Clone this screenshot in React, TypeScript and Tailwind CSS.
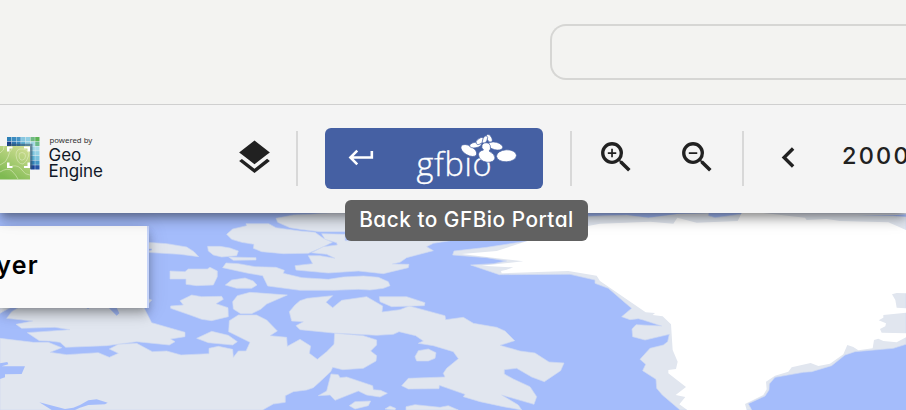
import type { ReactNode } from 'react';
import { MdChevronLeft, MdKeyboardReturn, MdLayers, MdZoomIn, MdZoomOut } from 'react-icons/md';

const islands = [
  '440,112 500,116 560,126 582,140 596,155 540,148 440,142',
  '623,124 660,124 690,129 715,138 710,152 665,156 640,150 625,138',
  '686,156 768,158 768,165 700,166',
  '510,198 555,200 565,192 622,192 630,187 652,198 652,215 640,240 590,242 558,238 558,222 510,222',
  '676,240 695,225 735,219 760,228 771,240 755,250 710,250',
  '668,188 678,174 715,176 765,185 828,187 853,196 850,205 906,218 985,223 1030,216 1090,213 1135,217 1165,230 1170,242 1150,250 1110,255 1075,253 1000,256 900,256 803,243 788,212 745,205',
  '680,88 698,72 740,62 738,56 806,56 828,68 900,78 945,82 970,100 997,112 960,130 925,145 850,146 785,140 760,130 762,118 725,112 695,103',
  '828,40 880,30 930,28 990,24 1764,24 1764,60 1400,80 960,80 900,73 870,68 833,52',
  '965,86 1035,88 1035,107 1350,107 1300,115 1280,125 1300,137 1220,158 1200,172 1177,177 1227,178 1225,188 1150,206 1075,198 985,204 888,195 885,182 938,176 925,152 960,152 1005,160 980,148 935,143 970,125 1012,120 1010,113 975,103',
  '512,303 550,300 540,287 575,270 605,275 665,274 670,283 648,296 684,308 685,335 635,347 605,343 570,330 512,310',
  '698,290 712,272 750,262 862,270 800,297 782,313 755,326 722,326 700,312',
  '590,400 635,379 685,391 712,410 698,420 625,413',
  '55,308 35,320 20,340 98,348 48,358 65,370 165,367 210,374 82,383 118,407 150,408 180,412 197,427 320,422 410,410 508,420 525,410 512,402 555,395 555,382 455,353 432,308',
  '440,280 455,285 445,297 440,297',
  '0,308 30,308 0,325',
  '0,400 100,412 145,412 185,428 150,442 200,449 295,443 328,457 355,445 328,432 355,418 410,415 457,440 500,438 543,450 627,446 627,430 655,424 698,433 700,457 715,438 738,438 750,412 686,380 688,347 715,330 770,330 800,345 832,378 810,392 860,397 862,424 900,403 932,423 928,445 952,463 980,440 1002,418 1004,385 1090,392 1130,405 1130,420 1112,438 1130,452 1128,468 1090,490 1028,494 998,487 992,500 960,530 940,548 920,555 880,560 856,572 856,592 820,597 788,615 0,615',
  '875,348 868,320 885,300 900,287 922,280 998,272 978,292 998,308 1025,286 1100,275 1148,303 1146,321 1200,314 1228,303 1280,317 1335,332 1337,344 1390,337 1420,355 1490,367 1515,378 1544,407 1500,421 1560,438 1605,444 1647,471 1692,474 1682,497 1633,530 1595,516 1550,490 1513,494 1513,507 1540,522 1590,545 1610,575 1602,598 1505,570 1555,600 1565,615 1510,605 1440,590 1390,575 1395,568 1318,541 1317,551 1225,552 1205,542 1225,520 1335,516 1330,505 1340,490 1375,461 1360,440 1300,422 1255,415 1270,408 1247,392 1197,380 1180,388 1130,391 1000,384 900,374 888,362 910,350',
  '1138,275 1220,275 1275,293 1273,302 1175,305 1140,290',
  '1245,455 1255,437 1285,432 1308,443 1305,460 1285,468 1250,468',
  '993,507 1015,509 1020,518 1040,516 1118,542 1120,554 1142,556 1162,565 1140,576 1100,570 1075,558 1005,586 990,570 955,572 980,558',
  '1048,602 1065,590 1112,588 1105,602 1065,612',
  '1155,612 1170,603 1187,610 1185,615',
  '1218,605 1245,599 1320,607 1345,602 1375,615 1218,615',
  '1358,150 1362,138 1460,127 1590,107 1700,90 1764,70 1764,34 1880,30 1945,38 2035,26 2125,24 2125,32 2145,38 2250,24 2718,24 2718,418 2680,430 2565,440 2535,450 2495,482 2435,500 2410,502 2325,517 2308,537 2307,555 2295,573 2245,596 2255,615 2040,615 1987,570 1970,550 1968,523 1928,497 1937,478 1920,463 1950,430 1990,420 2003,410 2008,388 1935,405 1898,395 1896,372 1908,359 1985,363 1930,345 1915,341 1890,344 1865,335 1895,310 1875,293 1825,250 1785,235 1785,225 1710,208 1498,209 1412,180 1480,176 1520,168 1460,158',
];

const lakes = [
  '440,132 455,131 455,136 440,137',
  '326,308 350,332 358,325 350,308',
  '258,308 270,308 264,312',
  '0,475 22,471 25,478 5,484 75,484 65,507 15,508 15,517 0,522',
  '118,592 195,612 220,608 240,600 265,586 290,583 323,593 315,598 265,600 240,608 225,615 155,615',
  '1764,24 2125,24 2035,26 1945,37 1880,29 1764,31',
  '2570,31 2680,31 2718,28 2718,35 2680,33',
];

const iceSheet =
  '1385,147 1490,138 1585,107 1700,75 1800,56 1950,50 2020,56 2032,38 2090,53 2213,48 2225,24 2290,24 2415,38 2420,45 2480,42 2520,48 2665,52 2718,75 2718,265 2690,264 2676,268 2686,285 2690,308 2718,310 2718,323 2650,330 2650,338 2636,346 2658,355 2656,364 2640,372 2645,383 2718,385 2718,397 2690,412 2650,408 2635,401 2622,405 2618,430 2575,436 2560,426 2542,420 2530,448 2490,476 2455,483 2432,474 2375,487 2365,500 2325,512 2298,530 2300,553 2290,570 2235,597 2240,615 2062,615 2038,598 2056,576 2027,570 2058,546 2005,505 2005,495 2028,492 2033,470 2018,435 2013,358 1988,334 1958,330 1965,324 1937,322 1800,228 1790,212 1705,198 1505,205 1503,198 1520,194 1540,187 1445,182 1570,169';

function WorldMap() {
  return (
    <svg className="block h-[197px] w-[906px]" viewBox="0 24 2718 591" preserveAspectRatio="none" aria-hidden="true">
      <rect y="24" width="2718" height="591" fill="#a4bcfb" />
      <g fill="#e1e6ef" stroke="#cfdaf2" strokeWidth="2" strokeLinejoin="round">
        {islands.map((points) => (
          <polygon key={points} points={points} />
        ))}
      </g>
      {lakes.map((points) => (
        <polygon key={points} points={points} fill="#a4bcfb" />
      ))}
      <polygon points={iceSheet} fill="#ffffff" />
    </svg>
  );
}

const tileColors = [
  '#2c7fb5', '#3c8cc0', '#4594c6', '#86c6df', '#8fcde2', '#6fba83', '#5cb455',
  '#173f8b', '#2d72ae', '#3787bd', '#5fb0d3', '#93cfe2', '#a3d8e4', '#6cbb8b',
  '#12357d', '#2b6fae', '#3787bd', '#4ea3cc', '#86c6df', '#9bd3e4', '#a9dce8',
  '#12357d', '#2b6fae', '#3787bd', '#4ea3cc', '#86c6df', '#7cc4df', '#93d1e4',
  '#12357d', '#2b6fae', '#3787bd', '#4ea3cc', '#86c6df', '#5bb0d4', '#79c2dd',
  '#12357d', '#2b6fae', '#3787bd', '#4ea3cc', '#86c6df', '#3181b9', '#4597c6',
  '#12357d', '#2b6fae', '#3787bd', '#4ea3cc', '#86c6df', '#17429a', '#2553a4',
];

function GeoEngineMark() {
  return (
    <svg className="block h-[44px] w-[40px]" viewBox="0 0 40 44" aria-hidden="true">
      <defs>
        <linearGradient id="terrain" x1="0.8" y1="0" x2="0.3" y2="1">
          <stop offset="0" stopColor="#cfdd92" />
          <stop offset="1" stopColor="#7fba52" />
        </linearGradient>
      </defs>
      {tileColors.map((color, i) => (
        <rect key={i} x={7 + (i % 7) * 4.7} y={1 + Math.floor(i / 7) * 4.7} width="4.3" height="4.3" fill={color} />
      ))}
      <path d="M8 7.800H32.500V33H30V10H8Z" fill="#35546b" opacity=".6" />
      <rect y="10" width="30" height="33.5" fill="url(#terrain)" />
      <g fill="none" stroke="#e9f2cf" strokeWidth=".6" opacity=".85">
        <path d="M0 17Q5 14 4 10M0 29Q7 26 8 21T12 13M0 36Q8 31 12 35T18 43M12 30Q19 29 22 34T30 39" />
        <path d="M19 20Q18.500 16.500 22 16.500T25.500 20T22.500 24T19 20ZM16 19Q16 12 23 13T28.500 20T23 28Q17 28 16 19" />
      </g>
      <path
        d="M7 15.500V10.500H12.500V12.500H9.500V15.500ZM24 10.500H30V15.500H27.500V12.500H24ZM7 26.500V32H12.500V30H9.500V26.500ZM24 32H30V26.500H27.500V30H24Z"
        fill="#fff"
      />
    </svg>
  );
}

function GfbioLogo() {
  return (
    <svg className="block h-[54px] w-[102px]" viewBox="416 132 102 54" role="img" aria-label="gfbio">
      <text
        x="416.500"
        y="175.700"
        fill="#fff"
        stroke="#fff"
        strokeWidth=".35"
        fontSize="32.500"
        fontWeight="300"
        textLength="75"
        className="font-['Open_Sans',sans-serif]"
      >
        gfbıo
      </text>
      <g fill="#fff" stroke="#4560a3" strokeWidth=".7">
        <ellipse cx="468.800" cy="150.500" rx="8.800" ry="4.700" transform="rotate(30 468.800 150.500)" />
        <ellipse cx="495.500" cy="146" rx="7.500" ry="3.800" transform="rotate(14 495.500 146)" />
        <ellipse cx="475.500" cy="145" rx="6" ry="2.800" transform="rotate(-10 475.500 145)" />
        <ellipse cx="480" cy="141" rx="4.500" ry="2.600" transform="rotate(-35 480 141)" />
        <ellipse cx="489.300" cy="138.300" rx="2.400" ry="4.200" transform="rotate(-28 489.300 138.300)" />
        <ellipse cx="485" cy="139.500" rx="2.200" ry="4" transform="rotate(22 485 139.500)" />
        <path d="M482 145Q484 141.800 488.500 143.200Q491 145 490.500 149Q489.500 150.500 489 151Q495 154 495 158Q494 162.500 487 162.300Q479 161 478.500 154.500Q478.500 151 483.500 150Q481 147.500 482 145Z" />
        <ellipse cx="506.500" cy="155.800" rx="10" ry="6" transform="rotate(-3 506.500 155.800)" />
      </g>
    </svg>
  );
}

function Divider() {
  return <div className="mt-[26px] h-[55px] w-[2px] shrink-0 bg-[#d8d8d8]" />;
}

function IconButton({ label, children }: { label: string; children: ReactNode }) {
  return (
    <button aria-label={label} className="mt-[32px] block size-10 shrink-0 text-[#212121]">
      {children}
    </button>
  );
}

function Toolbar() {
  return (
    <div className="relative z-10 flex h-[108px] items-start bg-[#f4f4f4] shadow-[0_4px_8px_-2px_rgba(0,0,0,0.3),0_8px_10px_rgba(0,0,0,0.16),0_2px_20px_rgba(0,0,0,0.14)]">
      <div className="flex w-[234px] shrink-0 pt-[31px]">
        <GeoEngineMark />
        <div className="ml-[8.5px] text-[#111827]">
          <div className="h-[11px] pl-px font-['Noto_Sans',sans-serif] text-[7.8px] leading-[9px] text-[#333]">
            powered by
          </div>
          <div className="font-[Inter,sans-serif] text-[17px] leading-[16px] tracking-[-0.05px] [font-feature-settings:'cv11']">
            <div>Geo</div>
            <div>Engine</div>
          </div>
        </div>
      </div>
      <IconButton label="Layers">
        <MdLayers size={41} />
      </IconButton>
      <div className="w-[22px] shrink-0" />
      <Divider />
      <div className="relative mt-[23px] ml-[27px] h-[61px] w-[218px] shrink-0">
        <button
          aria-label="Back to GFBio Portal"
          className="flex h-full w-full items-center rounded-[6px] bg-[#4560a3] pb-[2px] pl-[20.5px] text-white"
        >
          <MdKeyboardReturn size={31} className="shrink-0" />
          <span className="mt-[2px] ml-[39.5px]">
            <GfbioLogo />
          </span>
        </button>
        <div
          role="tooltip"
          className="absolute top-[71.5px] left-[20px] flex h-[41px] w-[243px] items-center justify-center rounded-[6px] bg-[#616161] pb-px font-[Inter,sans-serif] text-[20.8px] font-medium tracking-[0.5px] whitespace-nowrap text-white [font-feature-settings:'cv11']"
        >
          Back to GFBio Portal
        </div>
      </div>
      <div className="w-[27px] shrink-0" />
      <Divider />
      <div className="flex w-[170px] shrink-0 gap-[41px] pl-[24px]">
        <IconButton label="Zoom in">
          <MdZoomIn size={40.5} />
        </IconButton>
        <IconButton label="Zoom out">
          <MdZoomOut size={40.5} />
        </IconButton>
      </div>
      <Divider />
      <div className="ml-[24px] shrink-0">
        <IconButton label="Previous">
          <MdChevronLeft size={41} />
        </IconButton>
      </div>
      <div className="mt-[34px] ml-[34px] font-[Inter,sans-serif] text-[23.5px] leading-[34px] font-medium tracking-[2.2px] whitespace-nowrap text-[#212121]">
        2000
      </div>
    </div>
  );
}

export default function App() {
  return (
    <div className="h-[410px] w-[906px] overflow-hidden bg-[#a4bcfb]">
      <header className="relative z-20 flex h-[105px] justify-end border-b border-[#cfcfcf] bg-[#f3f3f1] pt-[24px]">
        <div className="h-[56px] w-[356px] rounded-l-[16px] border-2 border-r-0 border-[#d6d6d4]" />
      </header>
      <Toolbar />
      <main className="relative h-[197px]">
        <WorldMap />
        <div className="absolute top-[13px] left-0 flex h-[82px] w-[149px] justify-start border-r-2 border-[#c5d3f8] bg-[#fafafa] pt-[22px] shadow-[0_4px_8px_-2px_rgba(0,0,0,0.25),0_8px_10px_rgba(0,0,0,0.14),0_2px_20px_rgba(0,0,0,0.12)]">
          <span className="flex w-[39px] justify-end font-[Inter,sans-serif] text-[25px] leading-[34px] font-semibold tracking-[1.3px] whitespace-nowrap text-black">
            yer
          </span>
        </div>
      </main>
    </div>
  );
}
